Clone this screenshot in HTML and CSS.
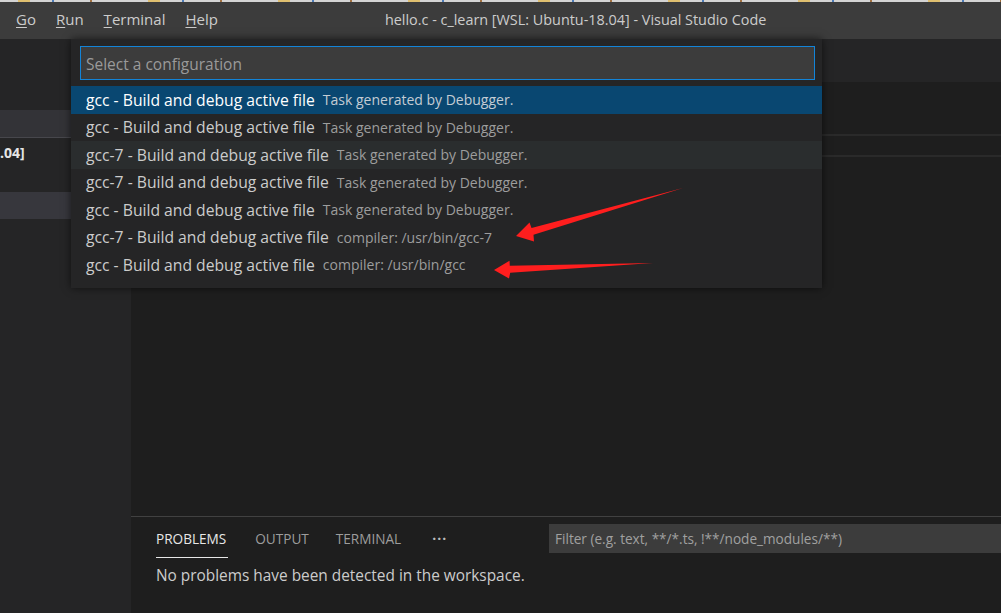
FILE: index.html
```html
<!DOCTYPE html>
<html>
<head>
<meta charset="utf-8">
<link rel="stylesheet" href="styles.css">
</head>
<body>
<div class="strip"></div>
<header class="titlebar">
  <nav class="menu">
    <span class="mi"><u>G</u>o</span>
    <span class="mi"><u>R</u>un</span>
    <span class="mi"><u>T</u>erminal</span>
    <span class="mi"><u>H</u>elp</span>
  </nav>
  <div class="title">hello.c - c_learn [WSL: Ubuntu-18.04] - Visual Studio Code</div>
</header>
<div class="main">
  <aside class="sidebar">
    <div class="sb-top"></div>
    <div class="sb-header"></div>
    <div class="sb-folder">.04]</div>
    <div class="sb-gap"></div>
    <div class="sb-selected"></div>
  </aside>
  <section class="editor">
    <div class="tabs"></div>
    <div class="ed-top"></div>
    <div class="crumbs"></div>
    <div class="ed-body"></div>
    <div class="panel">
      <div class="panel-head">
        <div class="ptabs">
          <span class="ptab active">PROBLEMS</span>
          <span class="ptab">OUTPUT</span>
          <span class="ptab">TERMINAL</span>
          <span class="ptab dots">···</span>
        </div>
        <div class="filter">Filter (e.g. text, **/*.ts, !**/node_modules/**)</div>
      </div>
      <div class="pmsg">No problems have been detected in the workspace.</div>
    </div>
  </section>
</div>

<div class="quickpick">
  <div class="qinput">Select a configuration</div>
  <div class="qlist">
    <div class="qrow sel"><span class="lbl">gcc - Build and debug active file</span><span class="desc">Task generated by Debugger.</span></div>
    <div class="qrow"><span class="lbl">gcc - Build and debug active file</span><span class="desc">Task generated by Debugger.</span></div>
    <div class="qrow hover"><span class="lbl">gcc-7 - Build and debug active file</span><span class="desc">Task generated by Debugger.</span></div>
    <div class="qrow"><span class="lbl">gcc-7 - Build and debug active file</span><span class="desc">Task generated by Debugger.</span></div>
    <div class="qrow"><span class="lbl">gcc - Build and debug active file</span><span class="desc">Task generated by Debugger.</span></div>
    <div class="qrow"><span class="lbl">gcc-7 - Build and debug active file</span><span class="desc">compiler: /usr/bin/gcc-7</span></div>
    <div class="qrow"><span class="lbl">gcc - Build and debug active file</span><span class="desc">compiler: /usr/bin/gcc</span></div>
  </div>
</div>

<svg class="arrows" width="1001" height="613" viewBox="0 0 1001 613">
  <polygon fill="#ff1e1e" points="516,236 529.5,222.5 531.5,228 683,188 533.5,234.8 534,241.5"/>
  <polygon fill="#ff1e1e" points="494,270 509.5,260.8 509.8,265.8 653,263 510.2,272.8 509,278.5"/>
</svg>
</body>
</html>
```

FILE: styles.css
```css
* { box-sizing: border-box; }
html, body {
  margin: 0;
  padding: 0;
}
body {
  width: 1001px;
  height: 613px;
  overflow: hidden;
  position: relative;
  background: #1e1e1e;
  font-family: "Open Sans", "Noto Sans", sans-serif;
  color: #cccccc;
}
.strip {
  height: 2px;
  background: repeating-linear-gradient(90deg, #d4d4d4 0 18px, #e0c070 18px 30px, #d4d4d4 30px 52px, #4a7ab8 52px 54px, #d4d4d4 54px 90px, #a07040 90px 92px, #d4d4d4 92px 130px);
}
.titlebar {
  height: 37px;
  background: #3c3c3c;
  display: flex;
  align-items: center;
  padding-bottom: 3px;
}
.menu {
  display: flex;
  padding-left: 16px;
  gap: 20px;
  font-size: 15px;
  color: #cccccc;
}
.mi u { text-decoration-thickness: 1px; text-underline-offset: 2px; }
.title {
  margin-left: 167px;
  font-size: 14.4px;
  color: #cccccc;
}
.main {
  display: flex;
  height: 574px;
}
.sidebar {
  width: 131px;
  background: #252526;
  display: flex;
  flex-direction: column;
}
.sb-top { height: 71px; }
.sb-header {
  height: 28px;
  background: #333337;
  border-bottom: 1px solid #47474c;
}
.sb-folder {
  height: 28px;
  display: flex;
  align-items: center;
  white-space: nowrap;
  font-weight: bold;
  font-size: 14px;
  color: #e6e6e6;
}
.sb-gap { height: 26px; }
.sb-selected {
  height: 27px;
  background: #37373d;
}
.editor {
  flex: 1;
  display: flex;
  flex-direction: column;
  background: #1e1e1e;
}
.tabs {
  height: 43px;
  background: #252526;
}
.ed-top { height: 52px; }
.crumbs {
  height: 23px;
  border-top: 2px solid #2a2a2a;
  border-bottom: 2px solid #2a2a2a;
}
.ed-body { flex: 1; }
.panel {
  height: 97px;
  border-top: 1px solid #414141;
  padding-left: 25px;
}
.panel-head {
  display: flex;
  align-items: flex-start;
  height: 42px;
}
.ptabs {
  flex: 0 0 393px;
  display: flex;
  gap: 27px;
  padding-top: 11px;
  font-size: 13.6px;
  color: #9d9d9d;
}
.ptab {
  height: 30px;
  line-height: 22px;
}
.ptab.active {
  color: #e7e7e7;
  border-bottom: 1px solid #e7e7e7;
  padding-right: 2px;
}
.ptab.dots {
  font-size: 14px;
  letter-spacing: 1px;
  font-weight: bold;
  color: #bbbbbb;
  margin-left: 4px;
}
.filter {
  margin-top: 7px;
  flex: 1;
  height: 29px;
  background: #3c3c3c;
  font-size: 13.6px;
  color: #a0a0a0;
  padding-left: 6px;
  line-height: 29px;
  white-space: nowrap;
}
.pmsg {
  font-size: 15.4px;
  color: #cccccc;
  line-height: 20px;
  margin-top: 7px;
}
.quickpick {
  position: absolute;
  left: 71px;
  top: 39px;
  width: 751px;
  height: 249px;
  background: #252526;
  box-shadow: 0 0 8px rgba(0,0,0,0.6);
}
.qinput {
  margin: 7px 7px 0 9px;
  height: 34px;
  border: 1px solid #1384d8;
  background: #3c3c3c;
  color: #9a9a9a;
  font-size: 15.5px;
  line-height: 33px;
  padding-left: 5px;
  padding-top: 1px;
}
.qlist { margin-top: 6px; }
.qrow {
  height: 27.5px;
  display: flex;
  align-items: center;
  padding-left: 15px;
  white-space: nowrap;
}
.qrow.sel { background: #094771; }
.qrow.hover { background: #2a2d2e; }
.lbl {
  font-size: 15.7px;
  color: #cccccc;
}
.qrow.sel .lbl { color: #ffffff; }
.desc {
  font-size: 14px;
  color: #9d9d9d;
  margin-left: 8px;
}
.qrow.sel .desc { color: #c4ccd4; }
.arrows {
  position: absolute;
  left: 0;
  top: 0;
  pointer-events: none;
}
```
